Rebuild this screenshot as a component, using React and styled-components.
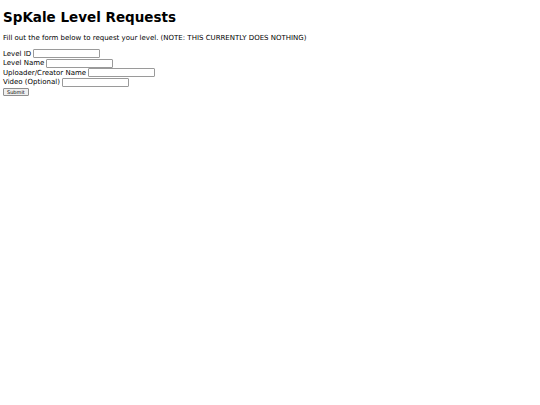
import React from "react";
import styled, { createGlobalStyle } from "styled-components";

const Global = createGlobalStyle`
  html, body {
    margin: 0;
    background: #fff;
  }
  body {
    padding: 4px 3px;
    font-family: "DejaVu Sans", Verdana, sans-serif;
    color: #000;
  }
`;

const Title = styled.h1`
  font-size: 13.5px;
  font-weight: bold;
  margin: 5px 0 8.5px;
  line-height: 16px;
`;

const Intro = styled.p`
  font-size: 7px;
  margin: 0 0 6.5px;
  line-height: 9px;
`;

const Form = styled.form`
  display: flex;
  flex-direction: column;
  align-items: flex-start;
  font-size: 7px;
`;

const Row = styled.label`
  display: flex;
  align-items: center;
  gap: 2px;
  height: 9.5px;
`;

const Field = styled.input`
  width: 67px;
  height: 9px;
  box-sizing: border-box;
  border: 1px solid #9a9a9a;
  border-radius: 1px;
  padding: 0;
  margin: 0;
  font-size: 6px;
`;

const Submit = styled.button`
  margin-top: 1px;
  font-family: "DejaVu Sans", Verdana, sans-serif;
  font-size: 5px;
  height: 8px;
  padding: 0 3px;
  border: 1px solid #8f8f8f;
  border-radius: 1px;
  background: #efefef;
  line-height: 6px;
`;

const fields = ["Level ID", "Level Name", "Uploader/Creator Name", "Video (Optional)"];

export default function App() {
  return (
    <>
      <Global />
      <Title>SpKale Level Requests</Title>
      <Intro>Fill out the form below to request your level. (NOTE: THIS CURRENTLY DOES NOTHING)</Intro>
      <Form onSubmit={(e) => e.preventDefault()}>
        {fields.map((f) => (
          <Row key={f}>
            {f}
            <Field type="text" />
          </Row>
        ))}
        <Submit type="submit">Submit</Submit>
      </Form>
    </>
  );
}
